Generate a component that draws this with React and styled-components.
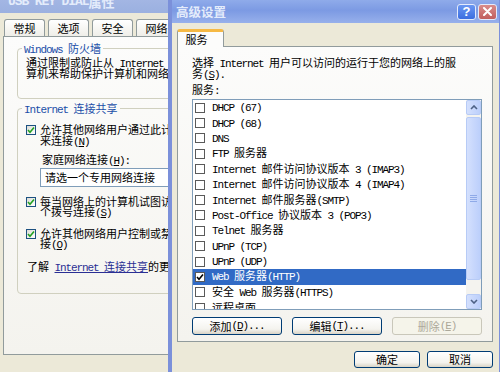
import React from "react";
import styled, { createGlobalStyle, css } from "styled-components";

const GlobalStyle = createGlobalStyle`
  html, body { margin: 0; padding: 0; }
  body {
    width: 500px;
    height: 372px;
    overflow: hidden;
    background: #ece9d8;
    font-family: "Noto Sans CJK SC", sans-serif;
    font-size: 11px;
    color: #000;
  }
`;

// latin runs use a mono face, like the SimSun half-width glyphs
const Lat = styled.span`
  font-family: "Liberation Mono", monospace;
  letter-spacing: -1.1px;
`;

const Acc = styled.u`
  text-decoration: underline;
  text-underline-offset: 1px;
`;

function Mix({ text }) {
  return text
    .split(/([\x20-\x7e]+)/)
    .filter(Boolean)
    .map((part, i) => {
      if (!/^[\x20-\x7e]+$/.test(part)) return <React.Fragment key={i}>{part}</React.Fragment>;
      const bits = part.split(/&(.)/);
      return <Lat key={i}>{bits.map((b, j) => (j % 2 ? <Acc key={j}>{b}</Acc> : b))}</Lat>;
    });
}

const services = [
  { name: "DHCP (67)" },
  { name: "DHCP (68)" },
  { name: "DNS" },
  { name: "FTP 服务器" },
  { name: "Internet 邮件访问协议版本 3 (IMAP3)" },
  { name: "Internet 邮件访问协议版本 4 (IMAP4)" },
  { name: "Internet 邮件服务器(SMTP)" },
  { name: "Post-Office 协议版本 3 (POP3)" },
  { name: "Telnet 服务器" },
  { name: "UPnP (TCP)" },
  { name: "UPnP (UDP)" },
  { name: "Web 服务器(HTTP)", checked: true, selected: true },
  { name: "安全 Web 服务器(HTTPS)" },
  { name: "远程桌面" },
];

export default function App() {
  return (
    <Desktop>
      <GlobalStyle />

      {/* 뒤쪽 속성 창 */}
      <BackWindow>
        <TitleBar $h={24} $pl={8} $bg="linear-gradient(#a9bbe6, #9bb0e0)">
          <Mix text="USB KEY DIAL 属性" />
        </TitleBar>
        <TabRow $mt={6} $pl={4}>
          {["常规", "选项", "安全", "网络"].map((t) => (
            <Tab key={t} $w={41} $h={17}>
              {t}
            </Tab>
          ))}
        </TabRow>
        <BackPanel>
          <Group>
            <Legend>
              <Mix text="Windows 防火墙" />
            </Legend>
            <Line>
              <Mix text="通过限制或防止从 Internet 访问此计算机" />
            </Line>
            <Line>算机来帮助保护计算机和网络</Line>
          </Group>

          <Group $mt={4} $pt={10} $pb={22}>
            <Legend>
              <Mix text="Internet 连接共享" />
            </Legend>
            <CheckRow>
              <XpBox>
                <Tick color="#21a121" />
              </XpBox>
              <div>
                <Line>
                  <Mix text="允许其他网络用户通过此计算机的 Internet" />
                </Line>
                <Line>
                  <Mix text="来连接(&N)" />
                </Line>
              </div>
            </CheckRow>
            <Indent $ml={16} $mt={9}>
              <Line>
                <Mix text="家庭网络连接(&H):" />
              </Line>
            </Indent>
            <Select>请选一个专用网络连接</Select>
            <CheckRow $mt={9}>
              <XpBox>
                <Tick color="#21a121" />
              </XpBox>
              <div>
                <Line>
                  <Mix text="每当网络上的计算机试图访问 Internet" />
                </Line>
                <Line>
                  <Mix text="个拨号连接(&S)" />
                </Line>
              </div>
            </CheckRow>
            <CheckRow $mt={11}>
              <XpBox>
                <Tick color="#21a121" />
              </XpBox>
              <div>
                <Line>
                  <Mix text="允许其他网络用户控制或禁用共享的" />
                </Line>
                <Line>
                  <Mix text="接(&O)" />
                </Line>
              </div>
            </CheckRow>
            <Indent $ml={1} $mt={12}>
              <Line>
                <Mix text="了解 " />
                <Link>
                  <Mix text="Internet 连接共享" />
                </Link>
                <Mix text="的更多信息。" />
              </Line>
            </Indent>
          </Group>
        </BackPanel>
      </BackWindow>

      {/* 고급 설정 창 */}
      <FrontWindow>
        <TitleBar $h={23} $pl={4} $pr={2} $bg="linear-gradient(#8fabea, #7c9ae3 45%, #97b0eb)">
          <TitleText>高级设置</TitleText>
          <CapButtons>
            <CapButton $kind="help">?</CapButton>
            <CapButton $kind="close">
              <svg width="9" height="9" viewBox="0 0 9 9">
                <path d="M1 1 L8 8 M8 1 L1 8" stroke="#fff" strokeWidth="2" strokeLinecap="round" />
              </svg>
            </CapButton>
          </CapButtons>
        </TitleBar>

        <Body>
          <TabRow $mt={0} $pl={0}>
            <Tab $w={47} $h={18} $active>
              服务
            </Tab>
          </TabRow>
          <FrontPanel>
            <Para>
              <Mix text="选择 Internet 用户可以访问的运行于您的网络上的服" />
            </Para>
            <Para>
              <Mix text="务(&S)." />
            </Para>
            <Para $mt={5}>
              <Mix text="服务:" />
            </Para>

            <List>
              <Rows>
                {services.map((s) => (
                  <Row key={s.name} $sel={s.selected}>
                    <FlatBox>{s.checked && <Tick color="#000" />}</FlatBox>
                    <span>
                      <Mix text={s.name} />
                    </span>
                  </Row>
                ))}
              </Rows>
              <ScrollBar>
                <ScrollBtn>
                  <svg width="8" height="5" viewBox="0 0 8 5">
                    <path d="M1 4 L4 1 L7 4" fill="none" stroke="#4d6185" strokeWidth="1.6" />
                  </svg>
                </ScrollBtn>
                <Thumb>
                  <svg width="7" height="7" viewBox="0 0 7 7">
                    <path d="M0 0.5 H7 M0 2.5 H7 M0 4.5 H7 M0 6.5 H7" stroke="#8faae8" strokeWidth="1" />
                  </svg>
                </Thumb>
                <Track />
                <ScrollBtn>
                  <svg width="8" height="5" viewBox="0 0 8 5">
                    <path d="M1 1 L4 4 L7 1" fill="none" stroke="#4d6185" strokeWidth="1.6" />
                  </svg>
                </ScrollBtn>
              </ScrollBar>
            </List>

            <ButtonGrid>
              <XpButton>
                <Mix text="添加(&D)..." />
              </XpButton>
              <XpButton>
                <Mix text="编辑(&T)..." />
              </XpButton>
              <XpButton disabled $disabled>
                <Mix text="删除(&E)" />
              </XpButton>
            </ButtonGrid>
          </FrontPanel>

          <Footer>
            <XpButton $w={66} $h={17}>
              确定
            </XpButton>
            <XpButton $w={66} $h={17}>
              取消
            </XpButton>
          </Footer>
        </Body>
      </FrontWindow>
    </Desktop>
  );
}

function Tick({ color }) {
  return (
    <svg width="8" height="8" viewBox="0 0 8 8">
      <path d="M1 4 L3 6.2 L7 1.6" fill="none" stroke={color} strokeWidth="1.6" />
    </svg>
  );
}

const Desktop = styled.div`
  position: relative;
  width: 500px;
  height: 372px;
  overflow: hidden;
  background: #ece9d8;
`;

const BackWindow = styled.div`
  position: absolute;
  z-index: 0;
  left: 0;
  top: -11px;
  width: 220px;
  height: 400px;
  background: #ece9d8;
  display: flex;
  flex-direction: column;
`;

const FrontWindow = styled.div`
  position: absolute;
  z-index: 1;
  left: 168px;
  top: 0;
  width: 335px;
  height: 380px;
  box-sizing: border-box;
  background: #ece9d8;
  border-left: 4px solid #7b90da;
  border-right: 4px solid #7b90da;
  display: flex;
  flex-direction: column;
`;

const TitleBar = styled.div`
  height: ${(p) => p.$h}px;
  flex: none;
  display: flex;
  align-items: center;
  padding: 0 ${(p) => p.$pr || 0}px 0 ${(p) => p.$pl}px;
  background: ${(p) => p.$bg};
  color: #e4ecfb;
  font-weight: bold;
  font-size: 13px;
  white-space: nowrap;
`;

const TitleText = styled.div`
  flex: 1;
  font-size: 12.5px;
`;

const CapButtons = styled.div`
  display: flex;
  gap: 2px;
`;

const CapButton = styled.div`
  width: 19px;
  height: 16px;
  box-sizing: border-box;
  border: 1px solid #e3eafb;
  border-radius: 3px;
  display: flex;
  align-items: center;
  justify-content: center;
  color: #fff;
  font-family: "Liberation Sans", sans-serif;
  font-size: 13px;
  font-weight: bold;
  ${(p) =>
    p.$kind === "help"
      ? css`
          background: linear-gradient(#6a97f2, #3b6de0);
        `
      : css`
          background: linear-gradient(#d98c8a, #c15f5e);
        `}
`;

const TabRow = styled.div`
  display: flex;
  gap: 3px;
  margin-top: ${(p) => p.$mt}px;
  padding-left: ${(p) => p.$pl}px;
  position: relative;
  z-index: 1;
  flex: none;
`;

const Tab = styled.div`
  width: ${(p) => p.$w}px;
  height: ${(p) => p.$h}px;
  flex: none;
  box-sizing: border-box;
  border: 1px solid #919b9c;
  border-bottom: none;
  border-radius: 3px 3px 0 0;
  background: linear-gradient(#ffffff, #efeee8);
  display: flex;
  align-items: center;
  justify-content: center;
  line-height: 11px;
  ${(p) =>
    p.$active &&
    css`
      border-top: 3px solid #f6b944;
      background: #fcfcfb;
      margin-bottom: -1px;
      padding-right: 8px;
    `}
`;

const Panel = styled.div`
  box-sizing: border-box;
  border: 1px solid #919b9c;
  background: linear-gradient(#fcfcfb, #f4f3ee);
  flex: none;
`;

const BackPanel = styled(Panel)`
  margin-left: 3px;
  height: 319px;
  padding: 6px 0 0 13px;
`;

const FrontPanel = styled(Panel)`
  height: 296px;
  padding: 10px 10px 6px 14px;
  display: flex;
  flex-direction: column;
`;

const Group = styled.fieldset`
  margin: ${(p) => p.$mt || 0}px 0 0;
  padding: ${(p) => p.$pt || 3}px 8px ${(p) => p.$pb || 20}px;
  border: 1px solid #d0d0bf;
  border-radius: 4px;
  min-width: 0;
`;

const Legend = styled.legend`
  margin-left: -4px;
  padding: 0 2px;
  height: 11px;
  color: #1b4fa8;
  line-height: 11px;
  white-space: nowrap;
`;

const Line = styled.div`
  height: 10.5px;
  white-space: nowrap;
  line-height: 10.5px;
`;

const CheckRow = styled.div`
  display: flex;
  align-items: flex-start;
  gap: 4px;
  margin-top: ${(p) => p.$mt || 0}px;
`;

const XpBox = styled.span`
  width: 10px;
  height: 10px;
  flex: none;
  box-sizing: border-box;
  margin-top: 1px;
  border: 1px solid #1c5180;
  background: linear-gradient(135deg, #dcdcd7, #ffffff);
  display: flex;
  align-items: center;
  justify-content: center;
`;

const FlatBox = styled.span`
  width: 10px;
  height: 10px;
  flex: none;
  box-sizing: border-box;
  border: 1px solid #5a5a5a;
  background: #fff;
  display: flex;
  align-items: center;
  justify-content: center;
`;

const Indent = styled.div`
  margin-left: ${(p) => p.$ml}px;
  margin-top: ${(p) => p.$mt}px;
`;

const Select = styled.div`
  margin: 3px 0 0 14px;
  height: 19px;
  box-sizing: border-box;
  border: 1px solid #7f9db9;
  background: #fff;
  padding-left: 4px;
  display: flex;
  align-items: center;
  white-space: nowrap;
`;

const Link = styled.span`
  color: #2a2f94;
  text-decoration: underline;
`;

const Body = styled.div`
  padding: 6px 6px 0 5px;
  display: flex;
  flex-direction: column;
`;

const Para = styled.div`
  height: 11px;
  flex: none;
  white-space: nowrap;
  line-height: 11px;
  margin-top: ${(p) => p.$mt || 0}px;
`;

const List = styled.div`
  margin-top: 4px;
  width: 290px;
  height: 211px;
  box-sizing: border-box;
  border: 1px solid #7f9db9;
  background: #fff;
  display: flex;
  flex: none;
`;

const Rows = styled.div`
  flex: 1;
  overflow: hidden;
  display: flex;
  flex-direction: column;
`;

const Row = styled.div`
  height: 15.4px;
  flex: none;
  display: flex;
  align-items: center;
  gap: 7px;
  padding-left: 2px;
  white-space: nowrap;
  line-height: 11px;
  background: ${(p) => (p.$sel ? "#316ac5" : "transparent")};
  color: ${(p) => (p.$sel ? "#fff" : "#000")};
`;

const ScrollBar = styled.div`
  width: 15px;
  flex: none;
  display: flex;
  flex-direction: column;
  background: #f4f3ef;
`;

const ScrollBtn = styled.div`
  height: 15px;
  flex: none;
  box-sizing: border-box;
  border: 1px solid #b7cbf6;
  border-radius: 2px;
  background: linear-gradient(90deg, #d4e0fd, #bccffb);
  display: flex;
  align-items: center;
  justify-content: center;
`;

const Thumb = styled(ScrollBtn)`
  height: 163px;
  margin-top: 2px;
`;

const Track = styled.div`
  flex: 1;
`;

const ButtonGrid = styled.div`
  margin-top: 7px;
  width: 290px;
  display: grid;
  grid-template-columns: repeat(3, 1fr);
  gap: 10px;
`;

const XpButton = styled.button`
  width: ${(p) => (p.$w ? `${p.$w}px` : "auto")};
  height: ${(p) => p.$h || 18}px;
  padding: 0;
  box-sizing: border-box;
  font: inherit;
  border: 1px solid ${(p) => (p.$disabled ? "#c9c7ba" : "#003c74")};
  border-radius: 3px;
  background: ${(p) =>
    p.$disabled ? "#f5f4ea" : "linear-gradient(#ffffff, #f4f3ee 70%, #d9d4c6)"};
  color: ${(p) => (p.$disabled ? "#aca899" : "#000")};
  display: flex;
  align-items: center;
  justify-content: center;
  white-space: nowrap;
  line-height: 11px;
`;

const Footer = styled.div`
  margin-top: 9px;
  display: flex;
  justify-content: flex-end;
  gap: 7px;
`;
